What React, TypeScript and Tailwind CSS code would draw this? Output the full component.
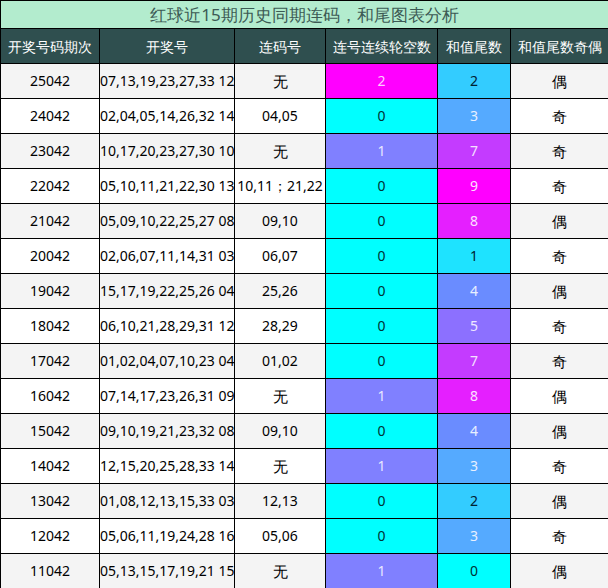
const rows: [string, string, string, number, number, string][] = [
  ["25042", "07,13,19,23,27,33 12", "无", 2, 2, "偶"],
  ["24042", "02,04,05,14,26,32 14", "04,05", 0, 3, "奇"],
  ["23042", "10,17,20,23,27,30 10", "无", 1, 7, "奇"],
  ["22042", "05,10,11,21,22,30 13", "10,11；21,22", 0, 9, "奇"],
  ["21042", "05,09,10,22,25,27 08", "09,10", 0, 8, "偶"],
  ["20042", "02,06,07,11,14,31 03", "06,07", 0, 1, "奇"],
  ["19042", "15,17,19,22,25,26 04", "25,26", 0, 4, "偶"],
  ["18042", "06,10,21,28,29,31 12", "28,29", 0, 5, "奇"],
  ["17042", "01,02,04,07,10,23 04", "01,02", 0, 7, "奇"],
  ["16042", "07,14,17,23,26,31 09", "无", 1, 8, "偶"],
  ["15042", "09,10,19,21,23,32 08", "09,10", 0, 4, "偶"],
  ["14042", "12,15,20,25,28,33 14", "无", 1, 3, "奇"],
  ["13042", "01,08,12,13,15,33 03", "12,13", 0, 2, "偶"],
  ["12042", "05,06,11,19,24,28 16", "05,06", 0, 3, "奇"],
  ["11042", "05,13,15,17,19,21 15", "无", 1, 0, "偶"],
];

const gapCls: Record<number, string> = {
  0: "bg-[#00ffff] text-[#003333]",
  1: "bg-[#8080ff] text-[#e8e8ff]",
  2: "bg-[#ff00ff] text-[#ffccff]",
};
const tailCls: Record<number, string> = {
  0: "bg-[#00ffff] text-[#003333]",
  1: "bg-[#1ee3ff] text-[#002233]",
  2: "bg-[#33ccff] text-[#002233]",
  3: "bg-[#55aaff] text-[#e8f0ff]",
  4: "bg-[#6a8cff] text-[#e8f0ff]",
  5: "bg-[#8c70ff] text-[#eee8ff]",
  7: "bg-[#c43bff] text-[#f4e0ff]",
  8: "bg-[#e51fff] text-[#fce0ff]",
  9: "bg-[#ff00ff] text-[#ffe0ff]",
};

const serif = "[font-family:'Liberation_Serif','Noto_Sans_CJK_SC',serif]";
const cjk = "[font-family:'Noto_Sans_CJK_SC',sans-serif]";

export default function App() {
  const heads = ["开奖号码期次", "开奖号", "连码号", "连号连续轮空数", "和值尾数", "和值尾数奇偶"];
  const widths = ["w-[99px]", "w-[135px]", "w-[91px]", "w-[112px]", "w-[73px]", "w-[98px]"];
  return (
    <div className="w-[608px] h-[588px] overflow-hidden bg-white">
      <table className="w-[608px] border-collapse table-fixed">
        <colgroup>
          {widths.map((w, i) => <col key={i} className={w} />)}
        </colgroup>
        <thead>
          <tr className="h-[28px]">
            <td colSpan={6} className={`border border-black bg-[#b3ecce] text-[#3c5a54] text-[17px] text-center leading-none ${serif}`}>
              红球近15期历史同期连码，和尾图表分析
            </td>
          </tr>
          <tr className="h-[35px]">
            {heads.map((h, i) => (
              <td key={i} className={`border border-black bg-[#2f4f4f] text-white text-[14px] text-center whitespace-nowrap p-0 ${cjk}`}>{h}</td>
            ))}
          </tr>
        </thead>
        <tbody>
          {rows.map((r, i) => (
            <tr key={i} className={`h-[35px] ${i % 2 === 0 ? "bg-[#f4f4f4]" : "bg-white"} text-black text-center whitespace-nowrap leading-none`}>
              <td className={`border border-black p-0 text-[14px] ${serif}`}>{r[0]}</td>
              <td className={`border border-black p-0 text-[14px] ${serif}`}>{r[1]}</td>
              <td className={`border border-black p-0 ${r[2] === "无" ? `text-[15px] ${cjk}` : `text-[14px] ${serif}`}`}>{r[2]}</td>
              <td className={`border border-black p-0 text-[14px] ${serif} ${gapCls[r[3]]}`}>{r[3]}</td>
              <td className={`border border-black p-0 text-[14px] ${serif} ${tailCls[r[4]]}`}>{r[4]}</td>
              <td className={`border border-black p-0 text-[15px] ${cjk}`}>{r[5]}</td>
            </tr>
          ))}
        </tbody>
      </table>
    </div>
  );
}
